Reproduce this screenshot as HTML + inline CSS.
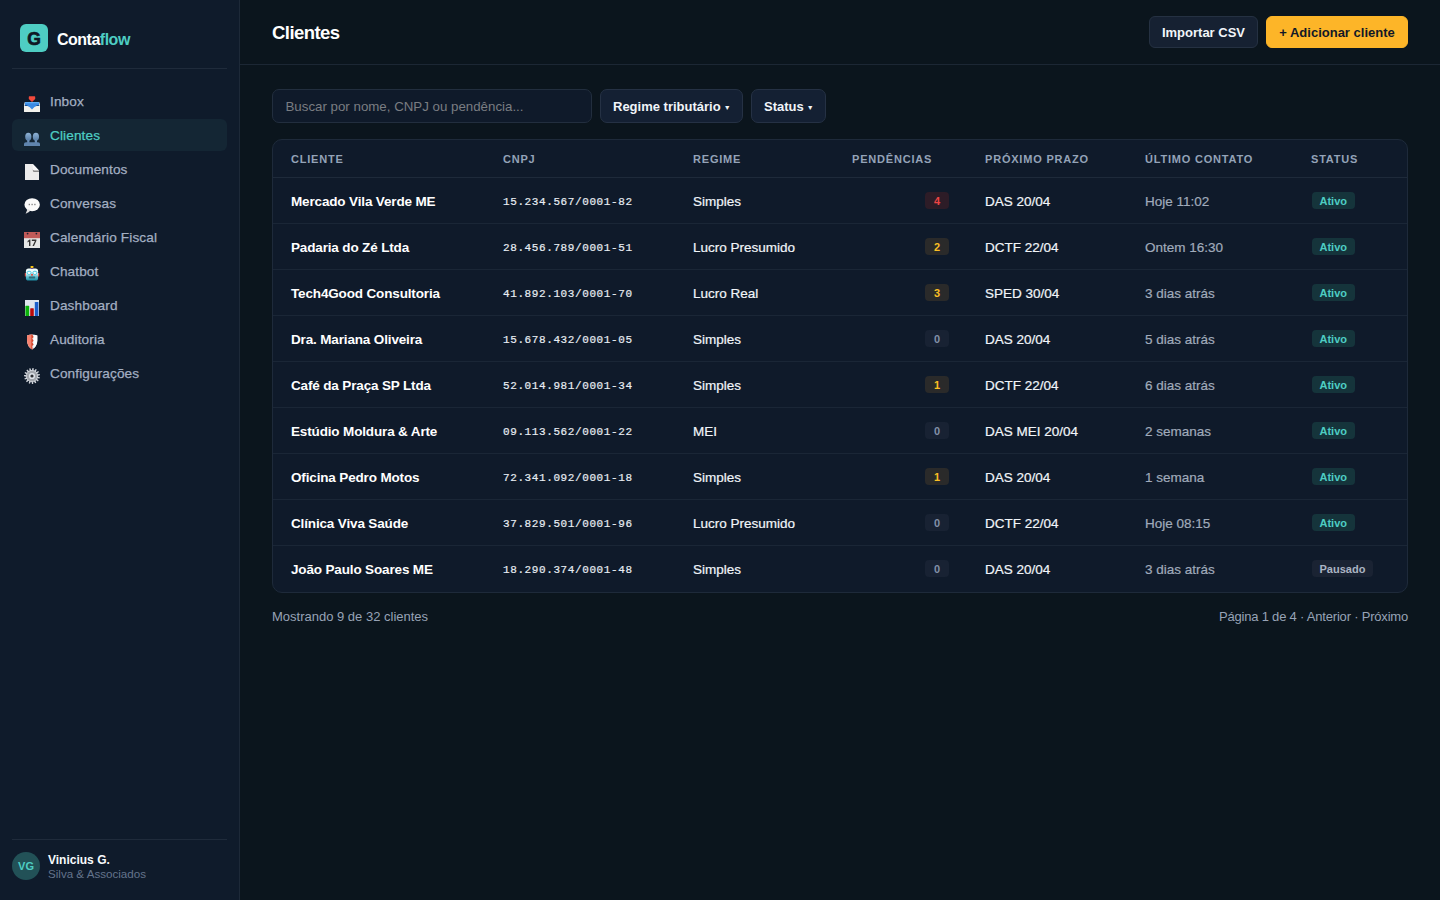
<!DOCTYPE html>
<html lang="pt-BR">
<head>
<meta charset="utf-8">
<title>Contaflow - Clientes</title>
<style>
*{box-sizing:border-box;margin:0;padding:0}
html,body{width:1440px;height:900px;overflow:hidden}
body{background:#0b151d;font-family:"Liberation Sans",sans-serif;color:#f1f5f9;position:relative}
.side{position:absolute;left:0;top:0;width:240px;height:900px;background:#0f1b2b;border-right:1px solid #1d2938}
.logo{position:absolute;left:20px;top:24px;width:28px;height:28px;border-radius:6px;background:#4ecdc3;color:#0f1724;font-weight:700;font-size:17.5px;line-height:31px;text-align:center;-webkit-text-stroke:0.7px #0f1724}
.brand{position:absolute;left:57px;top:30px;font-size:16px;font-weight:700;letter-spacing:-0.5px;color:#fff;line-height:20px}
.brand span{color:#4ecdc3}
.divider{position:absolute;left:12px;width:215px;height:1px;background:#1f2b3b}
.nav{position:absolute;left:12px;width:215px;height:32px;border-radius:6px;color:#a3afc2;font-size:13.6px;letter-spacing:0.12px;line-height:32px;-webkit-text-stroke:0.25px #a3afc2}
.nav.active{background:#142634;color:#4ecdc3;-webkit-text-stroke:0.25px #4ecdc3}
.nav svg{position:absolute;left:12px;top:11px;width:16px;height:16px}
.nav .t{position:absolute;left:38px;top:1px}
.user{position:absolute;left:12px;top:852px;width:28px;height:28px;border-radius:50%;background:#225157;color:#4ecdc3;font-size:11px;font-weight:700;line-height:29px;text-align:center}
.uname{position:absolute;left:48px;top:853px;font-size:12px;font-weight:700;color:#f8fafc;line-height:15px}
.uorg{position:absolute;left:48px;top:867px;font-size:11.6px;color:#64748b;line-height:14px}

.header{position:absolute;left:240px;top:0;width:1200px;height:65px;border-bottom:1px solid #1c2734}
.title{position:absolute;left:272px;top:22px;font-size:18.5px;font-weight:700;letter-spacing:-0.55px;color:#fff;line-height:22px}
.btn{position:absolute;top:16px;height:32px;border-radius:6px;font-size:13px;font-weight:700;line-height:32px;text-align:center}
.btn.sec{left:1149px;width:109px;background:#162132;border:1px solid #253142;color:#f1f5f9}
.btn.pri{left:1266px;width:142px;background:#fdb528;border:1px solid #fdb528;color:#111827}

.search{position:absolute;left:272px;top:89px;width:320px;height:34px;border-radius:7px;background:#0f1a2a;border:1px solid #222e3e;color:#7a7d82;font-size:13.3px;line-height:34px;padding-left:12.5px}
.filter{position:absolute;top:89px;height:34px;border-radius:7px;background:#142033;border:1px solid #253144;color:#f1f5f9;font-size:13px;font-weight:700;line-height:34px;padding-left:12px}
.filter i{font-style:normal;font-size:7px;position:relative;top:-1px;margin-left:3px}

.card{position:absolute;left:272px;top:139px;width:1136px;height:454px;border:1px solid #1e2a3a;border-radius:10px;background:#0f1a2a;overflow:hidden}
.row{position:relative;height:46px;border-bottom:1px solid #1a2636}
.row.h{height:38px;border-bottom:1px solid #1e2a3a}
.row.last{border-bottom:none}
.c{position:absolute;top:1px;line-height:45px;white-space:nowrap;font-size:13.5px}
.h .c{font-size:11px;font-weight:700;letter-spacing:0.8px;color:#94a3b8;line-height:37px}
.name{font-weight:700;color:#fff;letter-spacing:-0.15px}
.mono{font-family:"Liberation Mono",monospace;font-size:11px !important;letter-spacing:0.6px;-webkit-text-stroke:0.2px #e8edf3;color:#e8edf3;top:2px}
.reg{color:#f1f5f9;-webkit-text-stroke:0.2px #f1f5f9}
.ctt{color:#a0abbb;-webkit-text-stroke:0.2px #a0abbb}
.pb{position:absolute;top:14px;left:652px;width:24px;height:17px;border-radius:4px;font-size:11px;font-weight:700;line-height:19px;text-align:center}
.pb.r{background:#2d1c27;color:#ef4444}
.pb.a{background:#2a2a2a;color:#fbbf24}
.pb.z{background:#182233;color:#8291a8}
.st{position:absolute;top:14px;left:1039px;height:17px;border-radius:4px;font-size:11px;font-weight:700;line-height:19px;padding:0 7.5px}
.st.on{background:#15343b;color:#4ecdc3}
.st.off{background:#1a2333;color:#aab4c3}

.foot{position:absolute;top:609px;font-size:13px;color:#97a3b6;line-height:16px}
.foot.r{letter-spacing:-0.2px}
</style>
</head>
<body>
<div class="side">
  <div class="logo">G</div>
  <div class="brand">Conta<span>flow</span></div>
  <div class="divider" style="top:68px"></div>
  <!-- NAV -->
  <div class="nav" style="top:85px"><svg viewBox="0 0 16 16"><path d="M0.8,6 H15.2 L16,8.5 V15.4 Q16,16 15.4,16 H0.6 Q0,16 0,15.4 V8.5 Z" fill="#f3f1ec"/>
<path d="M1,6 H15 L15.2,10 H12.6 Q10.6,10.2 8,13.4 Q5.4,10.2 3.4,10 H0.8 Z" fill="#3a8ae4"/>
<path d="M1,6 H15 L15.1,7.2 H0.9 Z" fill="#5eacf4"/>
<path d="M0.8,9 H3.4 L3.4,10 H0.8 Z M12.6,9 H15.2 V10 H12.6 Z" fill="#1d4f8c"/>
<path d="M5.4,0.3 H10.6 Q11.2,0.3 11.2,0.9 V3 L8,5.9 L4.8,3 V0.9 Q4.8,0.3 5.4,0.3 Z" fill="#f24a3c"/></svg><span class="t">Inbox</span></div>
  <div class="nav active" style="top:119px"><svg viewBox="0 0 16 16"><defs><linearGradient id="ug" x1="0" y1="0" x2="0" y2="1"><stop offset="0" stop-color="#8fb3d6"/><stop offset="1" stop-color="#557aa3"/></linearGradient></defs>
<ellipse cx="4.3" cy="6.8" rx="3.1" ry="4.1" fill="url(#ug)"/><ellipse cx="11.9" cy="6.8" rx="3.1" ry="4.1" fill="url(#ug)"/>
<rect x="3.2" y="10" width="2.2" height="3" fill="#6a8db5"/><rect x="10.8" y="10" width="2.2" height="3" fill="#6a8db5"/>
<path d="M0,16 V13.8 Q0,12.4 2,12.2 H14 Q16,12.4 16,13.8 V16 Z" fill="#5f84ad"/></svg><span class="t">Clientes</span></div>
  <div class="nav" style="top:153px"><svg viewBox="0 0 16 16"><path d="M1,0 H8.8 L15,6.4 V16 H1 Z" fill="#ececec"/>
<path d="M8.8,0 V5 Q8.8,6.4 10.2,6.4 H15 Z" fill="#f8f8f8"/>
<path d="M8.8,5 Q8.8,6.4 10.2,6.4 H15 V8 H9.6 Q8.6,7.6 8.8,5 Z" fill="#8a8a8a"/></svg><span class="t">Documentos</span></div>
  <div class="nav" style="top:187px"><svg viewBox="0 0 16 16"><ellipse cx="8.15" cy="6.7" rx="7.7" ry="6.5" fill="#fafafa"/>
<path d="M3.6,11 L1.6,15.8 Q5,14.6 6.6,12.6 Z" fill="#e0e0e0"/>
<rect x="4.7" y="5.8" width="1.2" height="1.4" fill="#777"/><rect x="7.5" y="5.8" width="1.2" height="1.4" fill="#777"/><rect x="10.3" y="5.8" width="1.2" height="1.4" fill="#777"/></svg><span class="t">Conversas</span></div>
  <div class="nav" style="top:221px"><svg viewBox="0 0 16 16"><rect x="0" y="0" width="16" height="16" fill="#e4e6e6"/>
<rect x="0" y="0" width="16" height="6.2" fill="#c05a58"/>
<circle cx="3.6" cy="1.6" r="0.9" fill="#1b2433"/><circle cx="12.4" cy="1.6" r="0.9" fill="#1b2433"/>
<path d="M3.6,9 L5.6,7.6 H6.4 V14 H5 V9.6 L3.6,10.4 Z M7.8,7.6 H12.4 V8.8 L10,14 H8.5 L10.9,8.9 H7.8 Z" fill="#333"/></svg><span class="t">Calendário Fiscal</span></div>
  <div class="nav" style="top:255px"><svg viewBox="0 0 16 16"><defs><linearGradient id="bg1" x1="0" y1="0" x2="0" y2="1"><stop offset="0" stop-color="#f2ffff"/><stop offset="0.4" stop-color="#e6f7fa"/><stop offset="0.65" stop-color="#6cc3d2"/><stop offset="1" stop-color="#1d8fa6"/></linearGradient></defs>
<rect x="0.8" y="7" width="1.6" height="3.6" rx="0.6" fill="#d2483f"/><rect x="13.6" y="7" width="1.6" height="3.6" rx="0.6" fill="#d2483f"/>
<rect x="1.9" y="2.6" width="12.2" height="11.9" rx="2.6" fill="url(#bg1)"/>
<circle cx="8" cy="0.9" r="1.5" fill="#f5c518"/><rect x="7" y="2" width="2" height="1" fill="#6e4aa0"/>
<ellipse cx="5.1" cy="6.8" rx="2.1" ry="1.6" fill="none" stroke="#49c9e0" stroke-width="1"/><ellipse cx="10.9" cy="6.8" rx="2.1" ry="1.6" fill="none" stroke="#49c9e0" stroke-width="1"/>
<ellipse cx="5.1" cy="7.1" rx="1.1" ry="0.6" fill="#fff"/><ellipse cx="10.9" cy="7.1" rx="1.1" ry="0.6" fill="#fff"/>
<circle cx="8" cy="8.8" r="1.1" fill="#d9534a"/>
<rect x="4.8" y="10.6" width="6.4" height="1.8" rx="0.6" fill="#2b6c7a"/></svg><span class="t">Chatbot</span></div>
  <div class="nav" style="top:289px"><svg viewBox="0 0 16 16"><rect x="1" y="0" width="14" height="16" fill="#dfe5ee"/>
<rect x="1.4" y="5.8" width="3.8" height="10.2" rx="0.6" fill="#0ab20a"/>
<rect x="6.2" y="8.2" width="3.6" height="7.8" rx="0.6" fill="#bb0a0a"/>
<rect x="10.8" y="2" width="3.6" height="14" rx="0.6" fill="#1c5fcc"/></svg><span class="t">Dashboard</span></div>
  <div class="nav" style="top:323px"><svg viewBox="0 0 16 16"><path d="M3,1.6 Q8,-0.4 13.3,1.6 L13.3,6.4 Q13.2,12.2 8.2,15.6 Q3.1,12.2 3,6.4 Z" fill="#eef3f7"/>
<path d="M10,1.2 Q12,1.2 13.3,1.6 L13.3,6.4 Q13.2,11 10,14 Z" fill="#fbfdff"/>
<path d="M3,1.6 Q5.5,0.6 8.2,0.5 V15.6 Q3.1,12.2 3,6.4 Z" fill="#f6826f"/>
<path d="M7.4,0.6 H8.2 L9.6,3 L8.2,4.4 L9.6,6.8 L8.2,8.2 L9.6,10.6 L8.2,12 L8.6,15.2 L8.2,15.6 L7.4,15 Z" fill="#d5452a"/></svg><span class="t">Auditoria</span></div>
  <div class="nav" style="top:357px"><svg viewBox="0 0 16 16"><path d="M8.00,2.00 L8.47,0.01 L9.73,0.19 L9.64,2.23 L10.44,2.52 L11.68,0.89 L12.76,1.57 L11.84,3.39 L12.46,3.99 L14.25,3.00 L14.96,4.06 L13.39,5.35 L13.71,6.15 L15.74,5.98 L15.96,7.23 L14.00,7.77 L13.97,8.63 L15.89,9.30 L15.59,10.54 L13.57,10.23 L13.20,11.00 L14.68,12.40 L13.90,13.40 L12.18,12.30 L11.53,12.85 L12.31,14.74 L11.19,15.34 L10.07,13.63 L9.25,13.87 L9.20,15.91 L7.93,16.00 L7.60,13.99 L6.75,13.87 L5.88,15.71 L4.68,15.28 L5.20,13.31 L4.47,12.85 L2.93,14.19 L2.01,13.30 L3.28,11.71 L2.80,11.00 L0.85,11.59 L0.37,10.41 L2.18,9.47 L2.03,8.63 L0.01,8.37 L0.05,7.10 L2.09,6.97 L2.29,6.15 L0.55,5.09 L1.11,3.94 L3.02,4.66 L3.54,3.99 L2.38,2.31 L3.35,1.49 L4.81,2.92 L5.56,2.52 L5.18,0.51 L6.40,0.16 L7.15,2.06Z" fill="#d0d4da"/>
<circle cx="8" cy="8" r="5.3" fill="#a2a6ac"/><circle cx="8" cy="8" r="3.1" fill="#dde2e8"/><circle cx="8" cy="8" r="1.6" fill="#2e3034"/></svg><span class="t">Configurações</span></div>
  <div class="divider" style="top:839px"></div>
  <div class="user">VG</div>
  <div class="uname">Vinicius G.</div>
  <div class="uorg">Silva &amp; Associados</div>
</div>
<div class="header"></div>
<div class="title">Clientes</div>
<div class="btn sec">Importar CSV</div>
<div class="btn pri">+ Adicionar cliente</div>

<div class="search">Buscar por nome, CNPJ ou pendência...</div>
<div class="filter" style="left:600px;width:143px">Regime tributário<i>▼</i></div>
<div class="filter" style="left:751px;width:75px">Status<i>▼</i></div>

<div class="card">
  <!-- TABLE -->
  <div class="row h"><div class="c" style="left:18px">CLIENTE</div><div class="c" style="left:230px">CNPJ</div><div class="c" style="left:420px">REGIME</div><div class="c" style="left:579px">PENDÊNCIAS</div><div class="c" style="left:712px">PRÓXIMO PRAZO</div><div class="c" style="left:872px">ÚLTIMO CONTATO</div><div class="c" style="left:1038px">STATUS</div></div>
  <div class="row"><div class="c name" style="left:18px">Mercado Vila Verde ME</div><div class="c mono" style="left:230px">15.234.567/0001-82</div><div class="c reg" style="left:420px">Simples</div><span class="pb r">4</span><div class="c reg" style="left:712px">DAS 20/04</div><div class="c ctt" style="left:872px">Hoje 11:02</div><span class="st on">Ativo</span></div>
  <div class="row"><div class="c name" style="left:18px">Padaria do Zé Ltda</div><div class="c mono" style="left:230px">28.456.789/0001-51</div><div class="c reg" style="left:420px">Lucro Presumido</div><span class="pb a">2</span><div class="c reg" style="left:712px">DCTF 22/04</div><div class="c ctt" style="left:872px">Ontem 16:30</div><span class="st on">Ativo</span></div>
  <div class="row"><div class="c name" style="left:18px">Tech4Good Consultoria</div><div class="c mono" style="left:230px">41.892.103/0001-70</div><div class="c reg" style="left:420px">Lucro Real</div><span class="pb a">3</span><div class="c reg" style="left:712px">SPED 30/04</div><div class="c ctt" style="left:872px">3 dias atrás</div><span class="st on">Ativo</span></div>
  <div class="row"><div class="c name" style="left:18px">Dra. Mariana Oliveira</div><div class="c mono" style="left:230px">15.678.432/0001-05</div><div class="c reg" style="left:420px">Simples</div><span class="pb z">0</span><div class="c reg" style="left:712px">DAS 20/04</div><div class="c ctt" style="left:872px">5 dias atrás</div><span class="st on">Ativo</span></div>
  <div class="row"><div class="c name" style="left:18px">Café da Praça SP Ltda</div><div class="c mono" style="left:230px">52.014.981/0001-34</div><div class="c reg" style="left:420px">Simples</div><span class="pb a">1</span><div class="c reg" style="left:712px">DCTF 22/04</div><div class="c ctt" style="left:872px">6 dias atrás</div><span class="st on">Ativo</span></div>
  <div class="row"><div class="c name" style="left:18px">Estúdio Moldura &amp; Arte</div><div class="c mono" style="left:230px">09.113.562/0001-22</div><div class="c reg" style="left:420px">MEI</div><span class="pb z">0</span><div class="c reg" style="left:712px">DAS MEI 20/04</div><div class="c ctt" style="left:872px">2 semanas</div><span class="st on">Ativo</span></div>
  <div class="row"><div class="c name" style="left:18px">Oficina Pedro Motos</div><div class="c mono" style="left:230px">72.341.092/0001-18</div><div class="c reg" style="left:420px">Simples</div><span class="pb a">1</span><div class="c reg" style="left:712px">DAS 20/04</div><div class="c ctt" style="left:872px">1 semana</div><span class="st on">Ativo</span></div>
  <div class="row"><div class="c name" style="left:18px">Clínica Viva Saúde</div><div class="c mono" style="left:230px">37.829.501/0001-96</div><div class="c reg" style="left:420px">Lucro Presumido</div><span class="pb z">0</span><div class="c reg" style="left:712px">DCTF 22/04</div><div class="c ctt" style="left:872px">Hoje 08:15</div><span class="st on">Ativo</span></div>
  <div class="row last"><div class="c name" style="left:18px">João Paulo Soares ME</div><div class="c mono" style="left:230px">18.290.374/0001-48</div><div class="c reg" style="left:420px">Simples</div><span class="pb z">0</span><div class="c reg" style="left:712px">DAS 20/04</div><div class="c ctt" style="left:872px">3 dias atrás</div><span class="st off">Pausado</span></div>
</div>

<div class="foot" style="left:272px">Mostrando 9 de 32 clientes</div>
<div class="foot r" style="right:32px">Página 1 de 4 · Anterior · Próximo</div>
</body>
</html>
